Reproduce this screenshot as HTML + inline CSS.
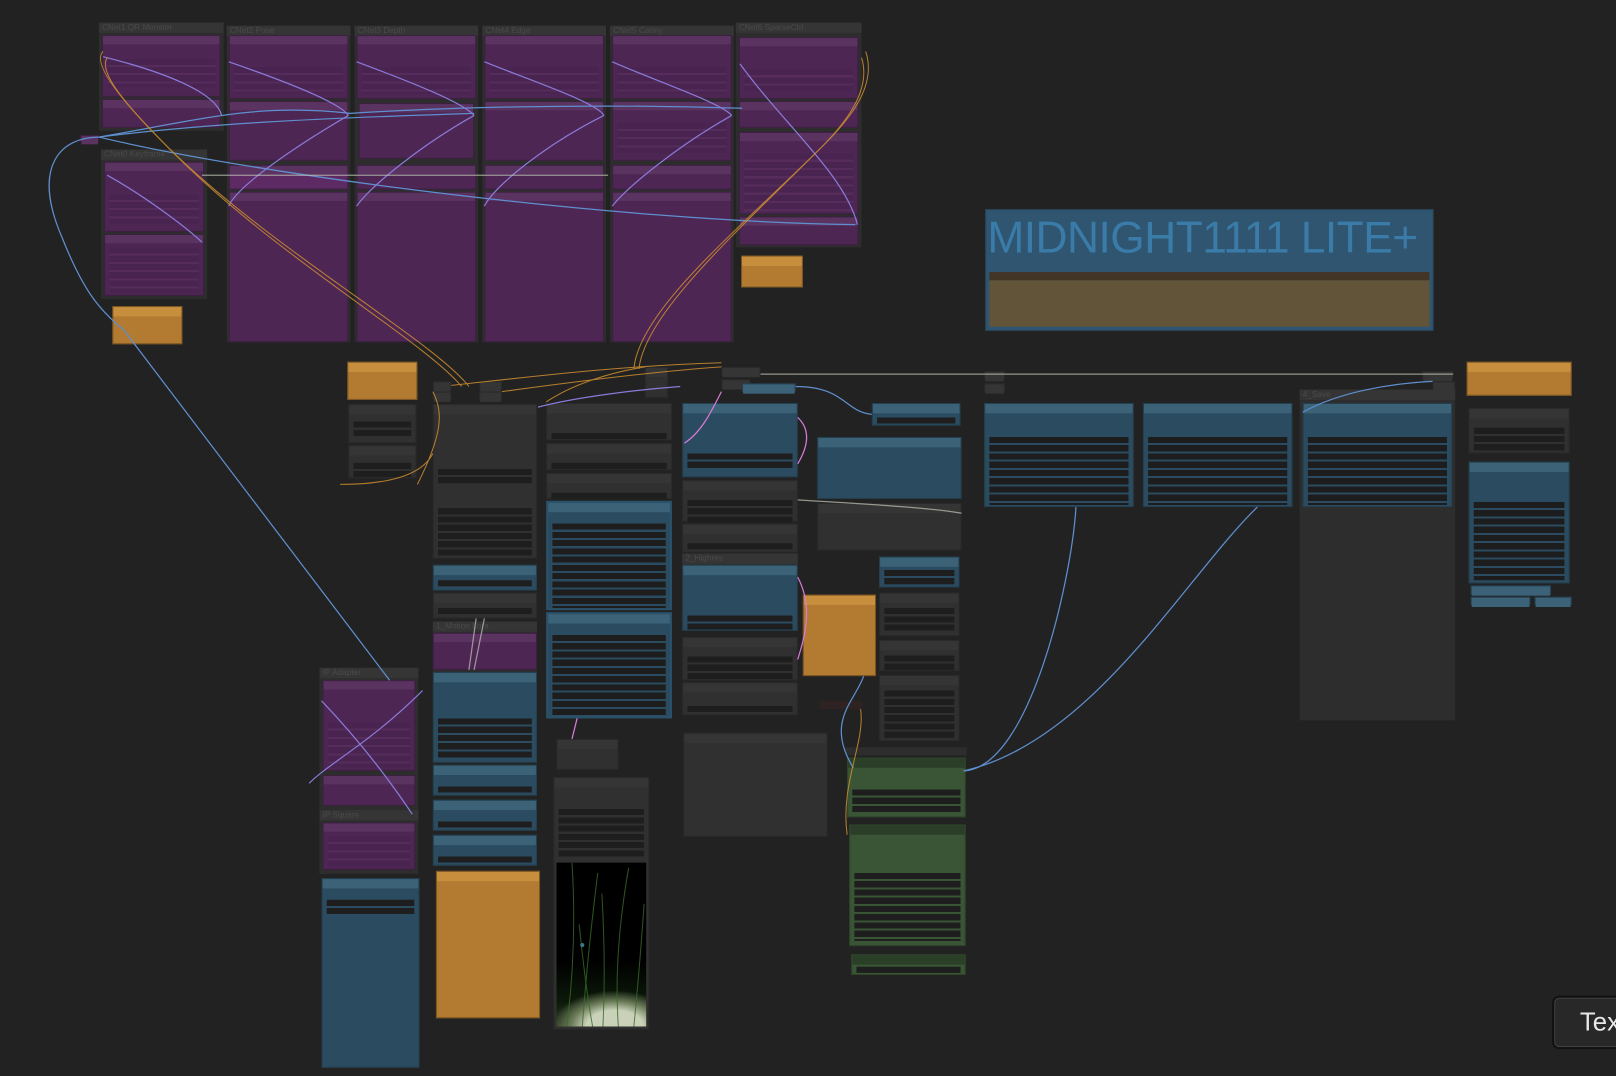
<!DOCTYPE html>
<html><head><meta charset="utf-8">
<style>
html,body{margin:0;padding:0;background:#222;overflow:hidden;width:1616px;height:1076px}
#c{position:absolute;left:0;top:0;width:1568px;height:1044px;transform:scale(1.03061);transform-origin:0 0;font-family:"Liberation Sans",sans-serif}
.n{position:absolute;box-sizing:border-box}
.g{background:#2d2d2d}
.gh{position:absolute;left:0;top:0;right:0;height:10px;background:#353535;color:#4a4a4a;font-size:8px;line-height:10px;padding-left:3px;white-space:nowrap;overflow:hidden}
.p{background:#4e2653;border:1px solid #3b2040}
.p:before{content:"";position:absolute;left:0;right:0;top:0;height:8px;background:#5a3360}
.o{background:#b27b31;border:1px solid #7a5522}
.o:before{content:"";position:absolute;left:0;right:0;top:0;height:9px;background:#c78e3e}
.b{background:#2b4c60;border:1px solid #24404f}
.b:before{content:"";position:absolute;left:0;right:0;top:0;height:9px;background:#3b6276}
.d{background:#303030;border:1px solid #2a2a2a}
.d:before{content:"";position:absolute;left:0;right:0;top:0;height:9px;background:#353535}
.gr{background:#3a5535;border:1px solid #2e4429}
.gr:before{content:"";position:absolute;left:0;right:0;top:0;height:9px;background:#2b3f28}
.rows{position:absolute;left:4px;right:4px;background:repeating-linear-gradient(#1e1e1e 0 6px,transparent 6px 8px)}
.rb{position:absolute;left:4px;right:4px;background:repeating-linear-gradient(#1d1d1d 0 6px,#2b4c60 6px 8px)}
.rp{position:absolute;left:4px;right:4px;background:repeating-linear-gradient(#4a2450 0 6px,#552c5a 6px 8px)}
</style></head><body><div id="c">

<div class="n g" style="left:96px;top:22px;width:121px;height:105px"><div class="gh">CNet1 QR Monster</div></div>
<div class="n p" style="left:99px;top:34px;width:115px;height:60px"><div class="rp" style="top:22px;height:28px"></div></div>
<div class="n p" style="left:99px;top:96px;width:115px;height:28px"></div>
<div class="n g" style="left:98px;top:145px;width:103px;height:145px"><div class="gh">CNet0 Keyframe</div></div>
<div class="n p" style="left:101px;top:157px;width:97px;height:68px"><div class="rp" style="top:30px;height:30px"></div></div>
<div class="n p" style="left:101px;top:227px;width:97px;height:60px"><div class="rp" style="top:12px;height:44px"></div></div>

<div class="n g" style="left:220px;top:25px;width:120px;height:307px"><div class="gh">CNet2 Pose</div></div>
<div class="n g" style="left:344px;top:25px;width:120px;height:307px"><div class="gh">CNet3 Depth</div></div>
<div class="n g" style="left:468px;top:25px;width:120px;height:307px"><div class="gh">CNet4 Edge</div></div>
<div class="n g" style="left:592px;top:25px;width:120px;height:307px"><div class="gh">CNet5 Canny</div></div>
<div class="n p" style="left:222px;top:34px;width:116px;height:62px"><div class="rp" style="top:30px;height:26px"></div></div>
<div class="n p" style="left:222px;top:98px;width:116px;height:58px"></div>
<div class="n p" style="left:222px;top:160px;width:116px;height:24px;background:#5e2a63"></div>
<div class="n p" style="left:222px;top:186px;width:116px;height:146px"></div>
<div class="n p" style="left:346px;top:34px;width:116px;height:62px"><div class="rp" style="top:30px;height:26px"></div></div>
<div class="n p" style="left:348px;top:100px;width:112px;height:54px"></div>
<div class="n p" style="left:346px;top:160px;width:116px;height:24px"></div>
<div class="n p" style="left:346px;top:186px;width:116px;height:146px"></div>
<div class="n p" style="left:470px;top:34px;width:116px;height:62px"><div class="rp" style="top:30px;height:26px"></div></div>
<div class="n p" style="left:470px;top:98px;width:116px;height:58px"></div>
<div class="n p" style="left:470px;top:160px;width:116px;height:24px"></div>
<div class="n p" style="left:470px;top:186px;width:116px;height:146px"></div>
<div class="n p" style="left:594px;top:34px;width:116px;height:62px"><div class="rp" style="top:30px;height:26px"></div></div>
<div class="n p" style="left:594px;top:98px;width:116px;height:58px"><div class="rp" style="top:20px;height:30px"></div></div>
<div class="n p" style="left:594px;top:160px;width:116px;height:24px"></div>
<div class="n p" style="left:594px;top:186px;width:116px;height:146px"></div>
<div class="n g" style="left:714px;top:22px;width:122px;height:218px"><div class="gh">CNet6 SparseCtrl</div></div>
<div class="n p" style="left:717px;top:36px;width:116px;height:60px"><div class="rp" style="top:30px;height:22px"></div></div>
<div class="n p" style="left:717px;top:98px;width:116px;height:26px"></div>
<div class="n p" style="left:717px;top:128px;width:116px;height:80px"><div class="rp" style="top:20px;height:56px"></div></div>
<div class="n p" style="left:717px;top:210px;width:116px;height:28px"></div>
<div class="n p" style="left:78px;top:131px;width:18px;height:6px;background:#5a2a60"></div>

<div class="n o" style="left:109px;top:297px;width:68px;height:37px"></div>
<div class="n o" style="left:719px;top:248px;width:60px;height:31px"></div>
<div class="n o" style="left:337px;top:351px;width:68px;height:37px"></div>
<div class="n o" style="left:1423px;top:351px;width:102px;height:33px"></div>
<div class="n o" style="left:779px;top:577px;width:71px;height:79px"></div>
<div class="n o" style="left:423px;top:845px;width:101px;height:143px"></div>

<div class="n" style="left:956px;top:203px;width:435px;height:118px;background:#2f5570;border:1px solid #28475c">
 <div style="position:absolute;left:1px;top:2px;font-size:43px;line-height:50px;color:#3a7ba8;letter-spacing:-0.5px;white-space:nowrap">MIDNIGHT1111 LITE+</div>
 <div style="position:absolute;left:3px;top:60px;right:3px;height:8px;background:#433526"></div>
 <div style="position:absolute;left:3px;top:68px;right:3px;bottom:3px;background:#625439"></div>
</div>

<div class="n d" style="left:420px;top:370px;width:18px;height:8px"></div>
<div class="n d" style="left:420px;top:380px;width:18px;height:8px"></div>
<div class="n d" style="left:465px;top:370px;width:22px;height:8px"></div>
<div class="n d" style="left:465px;top:380px;width:22px;height:8px"></div>
<div class="n d" style="left:626px;top:356px;width:22px;height:30px"></div>
<div class="n d" style="left:700px;top:356px;width:38px;height:8px"></div>
<div class="n d" style="left:700px;top:368px;width:28px;height:8px"></div>
<div class="n b" style="left:720px;top:372px;width:52px;height:8px;background:#3a6276"></div>
<div class="n d" style="left:955px;top:360px;width:20px;height:8px"></div>
<div class="n d" style="left:955px;top:372px;width:20px;height:8px"></div>
<div class="n d" style="left:1380px;top:360px;width:30px;height:8px"></div>
<div class="n d" style="left:1390px;top:370px;width:22px;height:8px"></div>
<div class="n" style="left:795px;top:680px;width:42px;height:8px;background:#2e2222"></div>

<div class="n d" style="left:338px;top:392px;width:66px;height:38px"><div class="rows" style="top:16px;height:14px"></div></div>
<div class="n d" style="left:338px;top:432px;width:66px;height:32px"><div class="rows" style="top:16px;height:14px"></div></div>
<div class="n d" style="left:420px;top:392px;width:101px;height:150px"><div class="rows" style="top:62px;height:14px"></div><div class="rows" style="top:100px;height:46px"></div></div>
<div class="n b" style="left:420px;top:548px;width:101px;height:25px"><div class="rows" style="top:14px;height:6px"></div></div>
<div class="n d" style="left:420px;top:575px;width:101px;height:25px"><div class="rows" style="top:14px;height:6px"></div></div>
<div class="n g" style="left:420px;top:603px;width:101px;height:50px"><div class="gh">1_Motion Lora</div></div>
<div class="n p" style="left:420px;top:614px;width:101px;height:36px"></div>
<div class="n b" style="left:420px;top:652px;width:101px;height:88px"><div class="rows" style="top:44px;height:38px"></div></div>
<div class="n b" style="left:420px;top:742px;width:101px;height:30px"><div class="rows" style="top:20px;height:6px"></div></div>
<div class="n b" style="left:420px;top:776px;width:101px;height:30px"><div class="rows" style="top:20px;height:6px"></div></div>
<div class="n b" style="left:420px;top:810px;width:101px;height:30px"><div class="rows" style="top:20px;height:6px"></div></div>

<div class="n g" style="left:310px;top:648px;width:96px;height:138px"><div class="gh">IP Adapter</div></div>
<div class="n p" style="left:313px;top:660px;width:90px;height:88px"><div class="rp" style="top:40px;height:44px"></div></div>
<div class="n p" style="left:313px;top:752px;width:90px;height:30px"></div>
<div class="n g" style="left:310px;top:786px;width:96px;height:62px"><div class="gh">IP Square</div></div>
<div class="n p" style="left:313px;top:798px;width:90px;height:46px"><div class="rp" style="top:12px;height:30px"></div></div>
<div class="n b" style="left:312px;top:852px;width:95px;height:184px"><div class="rows" style="top:20px;height:14px"></div></div>

<div class="n d" style="left:530px;top:391px;width:122px;height:36px"><div class="rows" style="top:28px;height:6px"></div></div>
<div class="n d" style="left:530px;top:430px;width:122px;height:26px"><div class="rows" style="top:18px;height:6px"></div></div>
<div class="n d" style="left:530px;top:459px;width:122px;height:25px"><div class="rows" style="top:18px;height:6px"></div></div>
<div class="n b" style="left:530px;top:486px;width:122px;height:106px;border:2px solid #2a5169"><div class="rb" style="top:20px;height:82px"></div></div>
<div class="n b" style="left:530px;top:594px;width:122px;height:103px;border:2px solid #2a5169"><div class="rb" style="top:20px;height:78px"></div></div>
<div class="n d" style="left:540px;top:717px;width:60px;height:30px"></div>
<div class="n d" style="left:537px;top:754px;width:93px;height:245px"><div class="rows" style="top:30px;height:48px"></div>
 <div style="position:absolute;left:2px;top:82px;right:2px;bottom:2px;background:radial-gradient(ellipse 70% 22% at 65% 100%,#c9d2b8 0 45%,#6a7a58 70%,transparent 100%),linear-gradient(#000 0 60%,#0c1a0a 85%,#2c3a22);overflow:hidden">
 <svg width="89" height="159" style="position:absolute;left:0;top:0"><g stroke="#3a6a2a" stroke-width="1" fill="none" opacity=".8"><path d="M10 159 Q20 80 15 0"/><path d="M25 159 Q30 90 40 10"/><path d="M45 159 Q48 100 44 30"/><path d="M60 159 Q55 90 70 5"/><path d="M75 159 Q80 110 85 40"/><path d="M35 159 Q28 120 22 60"/></g><circle cx="25" cy="80" r="2" fill="#3a7a8a"/></svg></div></div>

<div class="n b" style="left:662px;top:391px;width:112px;height:72px"><div class="rows" style="top:48px;height:14px"></div></div>
<div class="n d" style="left:662px;top:466px;width:112px;height:40px"><div class="rows" style="top:18px;height:22px"></div></div>
<div class="n d" style="left:662px;top:508px;width:112px;height:28px"><div class="rows" style="top:18px;height:6px"></div></div>
<div class="n g" style="left:662px;top:537px;width:112px;height:12px"><div class="gh">2_Highres</div></div>
<div class="n b" style="left:662px;top:548px;width:112px;height:64px"><div class="rows" style="top:48px;height:14px"></div></div>
<div class="n d" style="left:662px;top:618px;width:112px;height:42px"><div class="rows" style="top:18px;height:22px"></div></div>
<div class="n d" style="left:662px;top:662px;width:112px;height:32px"><div class="rows" style="top:22px;height:6px"></div></div>
<div class="n d" style="left:663px;top:711px;width:140px;height:101px"></div>

<div class="n b" style="left:846px;top:391px;width:86px;height:22px"><div class="rows" style="top:13px;height:6px"></div></div>
<div class="n b" style="left:793px;top:424px;width:140px;height:60px"></div>
<div class="n d" style="left:793px;top:488px;width:140px;height:46px"></div>
<div class="n b" style="left:853px;top:540px;width:78px;height:30px"><div class="rows" style="top:12px;height:14px"></div></div>
<div class="n d" style="left:853px;top:575px;width:78px;height:42px"><div class="rows" style="top:14px;height:22px"></div></div>
<div class="n d" style="left:853px;top:621px;width:78px;height:30px"><div class="rows" style="top:14px;height:14px"></div></div>
<div class="n d" style="left:853px;top:655px;width:78px;height:64px"><div class="rows" style="top:14px;height:46px"></div></div>

<div class="n g" style="left:820px;top:725px;width:118px;height:8px"></div>
<div class="n gr" style="left:822px;top:735px;width:115px;height:58px"><div class="rows" style="top:30px;height:22px"></div></div>
<div class="n gr" style="left:824px;top:800px;width:113px;height:118px"><div class="rows" style="top:46px;height:66px"></div></div>
<div class="n gr" style="left:826px;top:926px;width:111px;height:20px"><div class="rows" style="top:11px;height:6px"></div></div>

<div class="n g" style="left:1261px;top:378px;width:151px;height:321px"><div class="gh">4_Save</div></div>
<div class="n b" style="left:955px;top:391px;width:145px;height:101px"><div class="rb" style="top:32px;height:66px"></div></div>
<div class="n b" style="left:1109px;top:391px;width:145px;height:101px"><div class="rb" style="top:32px;height:66px"></div></div>
<div class="n b" style="left:1264px;top:391px;width:145px;height:101px"><div class="rb" style="top:32px;height:66px"></div></div>
<div class="n d" style="left:1425px;top:396px;width:98px;height:44px"><div class="rows" style="top:18px;height:22px"></div></div>
<div class="n b" style="left:1425px;top:448px;width:98px;height:118px"><div class="rb" style="top:38px;height:76px"></div></div>
<div class="n b" style="left:1427px;top:568px;width:78px;height:9px"></div>
<div class="n b" style="left:1427px;top:579px;width:58px;height:8px"></div>
<div class="n b" style="left:1489px;top:579px;width:36px;height:8px"></div>

<svg width="1568" height="1044" style="position:absolute;left:0;top:0" fill="none" stroke-width="1.2">
<g stroke="#5f8fcf">
<path d="M96 133 C60 133 30 160 60 230 C80 280 95 300 120 320 L378 660"/>
<path d="M96 133 C200 115 250 100 340 110 C420 105 560 100 720 105"/>
<path d="M96 133 C200 120 300 115 460 110"/>
<path d="M96 133 C250 170 600 215 830 218"/>
<path d="M935 748 C1000 745 1040 560 1044 492"/>
<path d="M935 748 C1060 720 1150 560 1220 492"/>
<path d="M772 375 C820 375 820 400 846 402"/>
<path d="M1264 400 C1300 380 1350 372 1390 370"/>
<path d="M828 745 C800 700 830 680 838 656"/>
</g>
<g stroke="#8a7ad8">
<path d="M100 55 C160 70 210 90 215 112"/>
<path d="M222 60 C280 80 330 100 338 112"/>
<path d="M346 60 C400 80 450 100 460 112"/>
<path d="M470 60 C520 80 580 100 586 112"/>
<path d="M594 60 C640 80 700 100 710 112"/>
<path d="M718 62 C760 120 820 170 832 218"/>
<path d="M338 112 C290 140 230 180 222 200"/>
<path d="M460 112 C410 140 360 180 346 200"/>
<path d="M586 112 C530 140 480 180 470 200"/>
<path d="M710 112 C660 140 610 180 594 200"/>
<path d="M104 170 C140 190 180 220 196 235"/>
<path d="M522 395 C560 385 620 378 660 375"/>
<path d="M410 670 C360 720 320 740 300 760"/>
<path d="M312 680 C350 720 380 760 400 790"/>
</g>
<g stroke="#d09030" stroke-width="1" opacity=".85">
<path d="M100 50 C90 60 110 90 160 140 C260 240 420 330 455 375"/>
<path d="M104 56 C95 70 120 100 170 150 C270 250 410 330 448 375"/>
<path d="M840 50 C850 80 830 110 800 140 C720 220 620 300 615 358"/>
<path d="M836 56 C845 85 825 115 795 145 C715 225 625 305 620 358"/>
<path d="M405 470 C430 420 430 400 420 380"/>
<path d="M438 374 C520 365 600 355 700 352"/>
<path d="M487 380 C560 370 640 360 700 356"/>
<path d="M530 390 C560 370 600 360 626 356"/>
<path d="M330 470 C380 470 410 460 420 440"/>
<path d="M822 810 C815 760 840 720 835 688"/>
</g>
<g stroke="#c0c8b8" opacity=".7">
<path d="M196 170 L590 170"/>
<path d="M738 363 L1410 363"/>
<path d="M933 498 C900 492 820 488 774 485"/>
<path d="M462 600 L455 650"/><path d="M470 600 L460 650"/>
</g>
<g stroke="#d77ad8">
<path d="M774 405 C790 420 780 440 774 450"/>
<path d="M774 560 C790 590 780 620 774 640"/>
<path d="M560 697 L555 717"/>
<path d="M700 380 C690 400 680 420 664 430"/>
</g>
</svg>

<div class="n" style="left:1506px;top:966px;width:80px;height:52px;background:#282828;border:2px solid #111;border-radius:7px;box-shadow:inset 0 0 0 1px #444"><span style="position:absolute;left:25px;top:10px;font-size:25px;color:#e8e8e8">Tex</span></div>
</div></body></html>
